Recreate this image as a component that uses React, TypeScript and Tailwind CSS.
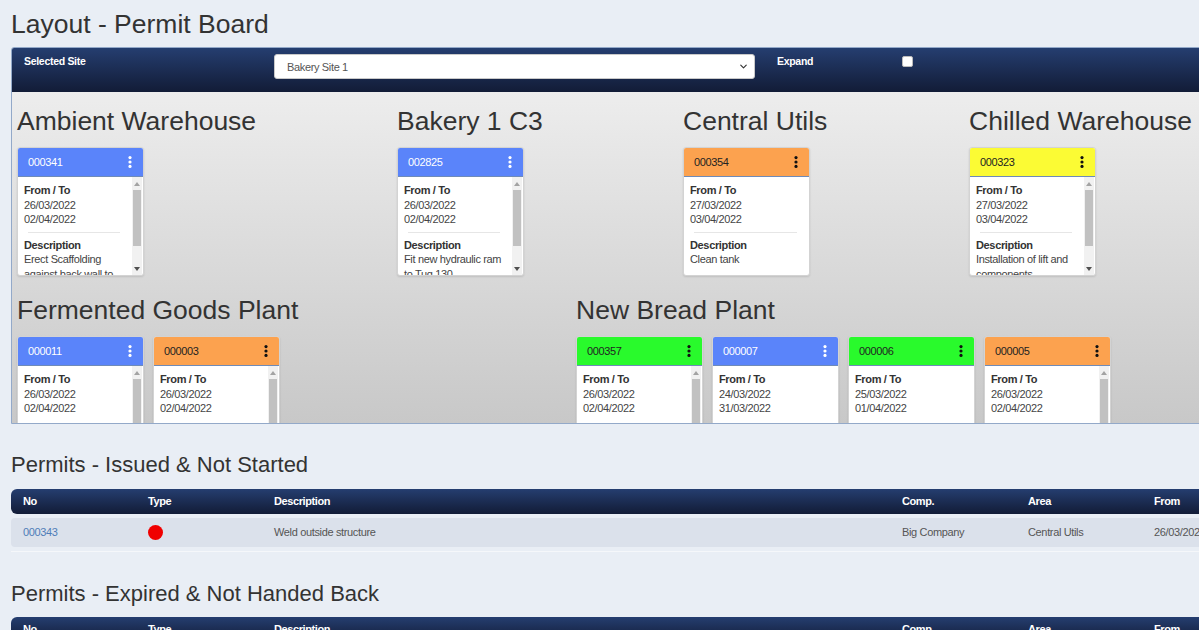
import { ChevronDown } from "lucide-react";

type Permit = {
  no: string;
  color: "blue" | "orange" | "yellow" | "green";
  from: string;
  to: string;
  desc?: string;
  scroll?: boolean;
};

const headerColors = {
  blue: "bg-[#5a84fa] text-white",
  orange: "bg-[#fca24f] text-[#222]",
  yellow: "bg-[#fbfb34] text-[#222]",
  green: "bg-[#29fa2c] text-[#222]",
};

const rowOne = [
  {
    title: "Ambient Warehouse",
    width: "w-[380px]",
    permits: [
      { no: "000341", color: "blue", from: "26/03/2022", to: "02/04/2022", desc: "Erect Scaffolding against back wall to allow access to roof", scroll: true },
    ] as Permit[],
  },
  {
    title: "Bakery 1 C3",
    width: "w-[286px]",
    permits: [
      { no: "002825", color: "blue", from: "26/03/2022", to: "02/04/2022", desc: "Fit new hydraulic ram to Tug 130", scroll: true },
    ] as Permit[],
  },
  {
    title: "Central Utils",
    width: "w-[286px]",
    permits: [{ no: "000354", color: "orange", from: "27/03/2022", to: "03/04/2022", desc: "Clean tank" }] as Permit[],
  },
  {
    title: "Chilled Warehouse",
    width: "w-[360px]",
    permits: [
      { no: "000323", color: "yellow", from: "27/03/2022", to: "03/04/2022", desc: "Installation of lift and components", scroll: true },
    ] as Permit[],
  },
];

const rowTwo = [
  {
    title: "Fermented Goods Plant",
    width: "w-[559px]",
    permits: [
      { no: "000011", color: "blue", from: "26/03/2022", to: "02/04/2022", scroll: true },
      { no: "000003", color: "orange", from: "26/03/2022", to: "02/04/2022", scroll: true },
    ] as Permit[],
  },
  {
    title: "New Bread Plant",
    width: "w-[700px]",
    permits: [
      { no: "000357", color: "green", from: "26/03/2022", to: "02/04/2022", scroll: true },
      { no: "000007", color: "blue", from: "24/03/2022", to: "31/03/2022" },
      { no: "000006", color: "green", from: "25/03/2022", to: "01/04/2022" },
      { no: "000005", color: "orange", from: "26/03/2022", to: "02/04/2022", scroll: true },
    ] as Permit[],
  },
];

const cols = ["No", "Type", "Description", "Comp.", "Area", "From"];

function Kebab({ light }: { light: boolean }) {
  return (
    <svg width="4" height="12" viewBox="0 0 4 12" className={light ? "fill-white" : "fill-[#111]"}>
      <circle cx="2" cy="1.6" r="1.6" />
      <circle cx="2" cy="6" r="1.6" />
      <circle cx="2" cy="10.4" r="1.6" />
    </svg>
  );
}

function FakeScroll() {
  return (
    <div className="mr-[1px] flex w-[10px] shrink-0 flex-col bg-[#f1f1f1]">
      <div className="flex h-[13px] items-center justify-center">
        <svg width="6" height="4" viewBox="0 0 6 4" className="fill-[#a3a3a3]">
          <polygon points="3,0 6,4 0,4" />
        </svg>
      </div>
      <div className="mx-[1px] h-[56px] bg-[#c1c1c1]" />
      <div className="flex-1" />
      <div className="flex h-[13px] items-center justify-center">
        <svg width="6" height="4" viewBox="0 0 6 4" className="fill-[#505050]">
          <polygon points="0,0 6,0 3,4" />
        </svg>
      </div>
    </div>
  );
}

function Card({ p }: { p: Permit }) {
  return (
    <div className="w-[127px] shrink-0 overflow-hidden rounded-[3px] border border-[#d3d3d3] bg-white shadow-[0_1px_2px_rgba(0,0,0,0.12)]">
      <div className={`flex h-[29px] items-center justify-between border-b border-[#6f8bb8] pl-[10px] pr-[11px] text-[11px] tracking-[-0.35px] ${headerColors[p.color]}`}>
        <span>{p.no}</span>
        <Kebab light={p.color === "blue"} />
      </div>
      <div className="flex h-[98px]">
        <div className="flex-1 overflow-hidden pl-[6px] pt-[6px] text-[11px] leading-[14.5px] tracking-[-0.35px] text-[#444]">
          <p className="font-bold text-[#333]">From / To</p>
          <p>{p.from}</p>
          <p>{p.to}</p>
          {p.desc && (
            <>
              <div className="my-[5px] ml-[4px] mr-[12px] h-px bg-[#e6e6e6]" />
              <p className="font-bold text-[#333]">Description</p>
              <p className="pr-[2px]">{p.desc}</p>
            </>
          )}
        </div>
        {p.scroll && <FakeScroll />}
      </div>
    </div>
  );
}

function Area({ title, width, permits }: { title: string; width: string; permits: Permit[] }) {
  return (
    <div className={`shrink-0 ${width}`}>
      <h2 className="mb-[11px] whitespace-nowrap text-[26.5px] leading-[30px] text-[#333]">{title}</h2>
      <div className="flex gap-[9px]">
        {permits.map((p) => (
          <Card key={p.no} p={p} />
        ))}
      </div>
    </div>
  );
}

function TableHead() {
  return (
    <div className="grid h-[25px] w-[1330px] grid-cols-[125px_126px_628px_126px_126px_126px] items-center rounded-[6px] bg-linear-to-b from-[#253e70] to-[#121c37] pl-[12px] text-[11px] font-bold tracking-[-0.4px] text-white">
      {cols.map((c) => (
        <span key={c}>{c}</span>
      ))}
    </div>
  );
}

export default function App() {
  return (
    <div className="h-screen w-screen overflow-hidden bg-[#e9eef5] font-['Liberation_Sans',Arial,sans-serif]">
      <div className="w-[1360px] pl-[11px] pt-[9px]">
        <h1 className="mb-[8px] text-[26.5px] leading-[30px] text-[#333]">Layout - Permit Board</h1>

        <div className="w-[1340px] overflow-hidden rounded-t-[3px] border border-[#93a9c9]">
          <div className="flex h-[44px] items-start bg-linear-to-b from-[#253e70] to-[#121c37] pl-[12px] pt-[6px] text-[10.5px] font-bold leading-[14px] tracking-[-0.3px] text-white">
            <span className="w-[250px] shrink-0">Selected Site</span>
            <div className="flex h-[25px] w-[481px] shrink-0 items-center justify-between rounded-[3px] border border-[#c9c9c9] bg-white pl-[12px] pr-[5px] text-[11px] font-normal tracking-[-0.35px] text-[#555]">
              <span>Bakery Site 1</span>
              <ChevronDown size={11} strokeWidth={2.5} className="text-[#333]" />
            </div>
            <span className="ml-[22px] w-[125px] shrink-0">Expand</span>
            <span className="mt-[2px] h-[11px] w-[11px] rounded-[2px] border border-[#bbb] bg-white" />
          </div>

          <div className="flex h-[331px] flex-col gap-[19px] bg-linear-to-b from-[#ededed] to-[#c8c8c8] pl-[5px] pt-[14px]">
            <div className="flex">
              {rowOne.map((a) => (
                <Area key={a.title} {...a} />
              ))}
            </div>
            <div className="flex">
              {rowTwo.map((a) => (
                <Area key={a.title} {...a} />
              ))}
            </div>
          </div>
        </div>

        <h2 className="mb-[11px] mt-[28px] text-[22px] leading-[26px] text-[#333]">Permits - Issued &amp; Not Started</h2>
        <TableHead />
        <div className="mt-[4px] grid h-[29px] w-[1330px] grid-cols-[125px_126px_628px_126px_126px_126px] items-center rounded-[4px] bg-[#dbe1eb] pl-[12px] text-[11px] tracking-[-0.35px] text-[#555]">
          <span className="text-[#4f7db8]">000343</span>
          <span className="h-[15px] w-[15px] rounded-full bg-[#f00000]" />
          <span>Weld outside structure</span>
          <span>Big Company</span>
          <span>Central Utils</span>
          <span>26/03/2022</span>
        </div>
        <div className="mt-[4px] h-px w-[1330px] bg-[#f5f7fa]" />

        <h2 className="mb-[10px] mt-[29px] text-[22px] leading-[26px] text-[#333]">Permits - Expired &amp; Not Handed Back</h2>
        <TableHead />
      </div>
    </div>
  );
}
